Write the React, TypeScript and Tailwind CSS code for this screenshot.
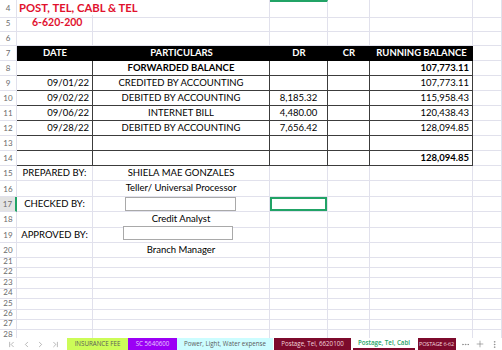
import React from 'react';
import { ChevronFirst, ChevronLeft, ChevronRight, ChevronLast, Ellipsis, Plus, EllipsisVertical } from 'lucide-react';

const GRID = 'grid grid-cols-[17px_76px_177px_58px_42px_103px_1fr]';
const LIGHT = 'border-r border-b border-[#e1e1ec]';
const DARK = 'border-r border-b border-[#3c3c3c]';

type RowProps = {
  n: number;
  h: string;
  selected?: boolean;
  children: React.ReactNode;
};

const Row: React.FC<RowProps> = ({ n, h, selected, children }) => (
  <div className={`${GRID} ${h}`}>
    <div
      className={`flex items-center justify-center text-[8px] text-[#6b6b6b] border-b border-[#e1e1ec] ${
        selected ? 'bg-[#e3e3e3] border-r-2 border-r-[#21a366]' : 'border-r'
      }`}
    >
      {n}
    </div>
    {children}
  </div>
);

const Empty: React.FC<{ cls?: string }> = ({ cls = LIGHT }) => <div className={cls} />;

const tableRows = [
  { n: 8, date: '', part: 'FORWARDED BALANCE', dr: '', bal: '107,773.11', bold: true },
  { n: 9, date: '09/01/22', part: 'CREDITED BY ACCOUNTING', dr: '', bal: '107,773.11' },
  { n: 10, date: '09/02/22', part: 'DEBITED BY ACCOUNTING', dr: '8,185.32', bal: '115,958.43' },
  { n: 11, date: '09/06/22', part: 'INTERNET BILL', dr: '4,480.00', bal: '120,438.43' },
  { n: 12, date: '09/28/22', part: 'DEBITED BY ACCOUNTING', dr: '7,656.42', bal: '128,094.85' },
  { n: 13, date: '', part: '', dr: '', bal: '' },
  { n: 14, date: '', part: '', dr: '', bal: '128,094.85', boldBal: true },
];

const tabs = [
  { label: 'INSURANCE FEE', cls: 'w-[61px] bg-[#ccfc58] text-[#5a5a5a]' },
  { label: 'SC 5640600', cls: 'w-[49px] bg-[#9b00f5] text-[#e6ccff]' },
  { label: 'Power, Light, Water expense', cls: 'w-[96px] bg-[#ccfdff] text-[#5a5a5a]' },
  { label: 'Postage, Tel, 6620100', cls: 'w-[77px] bg-[#7d0a2c] text-[#f3d6de] ml-[1px]' },
];

export default function App() {
  return (
    <div className="w-[502px] h-[350px] overflow-hidden bg-white font-['Lato',sans-serif] text-[9.5px] text-black flex flex-col">
      {/* row 4 */}
      <Row n={4} h="h-[15px]">
        <div className={`col-span-2 ${LIGHT} flex items-center pl-[2px] text-[11.3px] font-bold text-[#e1112e]`}>
          POST, TEL, CABL &amp; TEL
        </div>
        <div className={`${LIGHT} border-t-2 border-t-[#21a366]`} />
        <Empty />
        <Empty />
        <Empty />
      </Row>
      <Row n={5} h="h-[15px]">
        <div className={`${LIGHT} flex items-center pl-[15px] text-[10.5px] font-bold text-[#e1112e]`}>6-620-200</div>
        <Empty />
        <Empty />
        <Empty />
        <Empty />
        <Empty />
      </Row>
      <Row n={6} h="h-[16px]">
        <Empty />
        <Empty />
        <Empty />
        <Empty />
        <Empty />
        <Empty />
      </Row>
      {/* header */}
      <Row n={7} h="h-[15px]">
        {['DATE', 'PARTICULARS', 'DR', 'CR', 'RUNNING BALANCE'].map((t) => (
          <div key={t} className="bg-black text-white font-bold flex items-center justify-center">
            {t}
          </div>
        ))}
        <Empty />
      </Row>
      {tableRows.map((r) => (
        <Row key={r.n} n={r.n} h="h-[15px]">
          <div className={`${DARK} flex items-center justify-end pr-[3px]`}>{r.date}</div>
          <div className={`${DARK} flex items-center justify-center ${r.bold ? 'font-bold' : ''}`}>{r.part}</div>
          <div className={`${DARK} flex items-center justify-center`}>{r.dr}</div>
          <div className={DARK} />
          <div className={`${DARK} flex items-center justify-end pr-[3px] ${r.bold || r.boldBal ? 'font-bold' : ''}`}>
            {r.bal}
          </div>
          <Empty />
        </Row>
      ))}
      <Row n={15} h="h-[15.4px]">
        <div className={`${LIGHT} flex items-center justify-center`}>PREPARED BY:</div>
        <div className={`${LIGHT} flex items-center justify-center`}>SHIELA MAE GONZALES</div>
        <Empty />
        <Empty />
        <Empty />
        <Empty />
      </Row>
      <Row n={16} h="h-[15.4px]">
        <Empty />
        <div className={`${LIGHT} flex items-center justify-center`}>Teller/ Universal Processor</div>
        <Empty />
        <Empty />
        <Empty />
        <Empty />
      </Row>
      <Row n={17} h="h-[15.4px]" selected>
        <div className={`${LIGHT} flex items-center justify-center`}>CHECKED BY:</div>
        <div className={`${LIGHT} flex items-center`}>
          <div className="ml-[32px] w-[111px] h-[14px] bg-white border border-[#a9a9a9]" />
        </div>
        <div className={`${LIGHT} shadow-[inset_0_0_0_2px_#21a366]`} />
        <Empty />
        <Empty />
        <Empty />
      </Row>
      <Row n={18} h="h-[15.4px]">
        <Empty />
        <div className={`${LIGHT} flex items-center justify-center`}>Credit Analyst</div>
        <Empty />
        <Empty />
        <Empty />
        <Empty />
      </Row>
      <Row n={19} h="h-[15.4px]">
        <div className={`${LIGHT} flex items-center justify-center`}>APPROVED BY:</div>
        <div className={`${LIGHT} flex items-start`}>
          <div className="ml-[30px] -mt-[2px] w-[110px] h-[14px] bg-white border border-[#a9a9a9]" />
        </div>
        <Empty />
        <Empty />
        <Empty />
        <Empty />
      </Row>
      <Row n={20} h="h-[12px]">
        <Empty />
        <div className={`${LIGHT} flex items-center justify-center`}>Branch Manager</div>
        <Empty />
        <Empty />
        <Empty />
        <Empty />
      </Row>
      {[21, 22, 23, 24, 25, 26, 27, 28].map((n) => (
        <Row key={n} n={n} h="h-[10.4px]">
          <Empty />
          <Empty />
          <Empty />
          <Empty />
          <Empty />
          <Empty />
        </Row>
      ))}
      {/* sheet tabs */}
      <div className="flex-1 flex items-stretch text-[6.2px] font-['Open_Sans',sans-serif] bg-white">
        <div className="w-[67px] flex items-center justify-around px-[4px] text-[#7a7a7a]">
          <ChevronFirst size={9} strokeWidth={1.4} />
          <ChevronLeft size={9} strokeWidth={1.4} />
          <ChevronRight size={9} strokeWidth={1.4} />
          <ChevronLast size={9} strokeWidth={1.4} />
        </div>
        {tabs.map((t) => (
          <div key={t.label} className={`${t.cls} flex items-center justify-center whitespace-nowrap overflow-hidden`}>
            {t.label}
          </div>
        ))}
        <div className="ml-[2px] w-[62px] flex items-center justify-center text-[#21a366] font-semibold border-b-2 border-[#7d0a2c]">
          Postage, Tel, Cabl
        </div>
        <div className="ml-[3px] w-[38px] bg-[#7d0a2c] text-[#f3d6de] flex items-center pl-[1px] text-[5.6px] tracking-[-0.2px] whitespace-nowrap">
          POSTAGE 6-62
        </div>
        <div className="flex items-center gap-[5px] pl-[5px] text-[#777]">
          <Ellipsis size={9} strokeWidth={1.6} />
          <Plus size={10} strokeWidth={1.4} />
          <EllipsisVertical size={9} strokeWidth={1.6} />
        </div>
      </div>
    </div>
  );
}
